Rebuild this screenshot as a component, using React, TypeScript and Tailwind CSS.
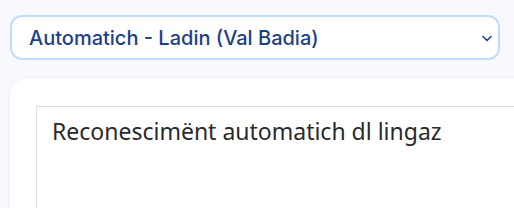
export default function App() {
  return (
    <div className="h-[208px] w-[514px] overflow-hidden bg-[#f8f9fc] px-[10px] pt-[15px]">
      {/* Language picker */}
      <div className="relative w-[490px]">
        <select
          defaultValue="auto-lld"
          className="h-[45px] w-full appearance-none rounded-[12px] border-2 border-[#bfdbfe] bg-white pl-[17px] pr-10 text-[20px] font-medium text-[#1e3f86] outline-none"
          style={{ fontFamily: 'Inter, "Noto Sans", sans-serif' }}
        >
          <option value="auto-lld">Automatich - Ladin (Val Badia)</option>
        </select>
        <svg
          className="pointer-events-none absolute right-[8px] top-[20px]"
          width="10"
          height="7"
          viewBox="0 0 10 7"
          fill="none"
        >
          <path d="M1 1.5 L5 5.5 L9 1.5" stroke="#1e3f86" strokeWidth="1.6" strokeLinecap="round" strokeLinejoin="round" />
        </svg>
      </div>

      {/* Input card */}
      <div className="mt-[19px] w-[540px] rounded-[16px] bg-white pl-[26px] pt-[27px] shadow-[0_0_6px_rgba(15,23,42,0.04)]">
        <textarea
          className="block h-[160px] w-full resize-none border border-[#d8dce3] px-[15px] py-[7px] text-[23px] leading-[1.5] text-[#2a2a2a] outline-none"
          style={{ fontFamily: '"Noto Sans", sans-serif' }}
          defaultValue="Reconescimënt automatich dl lingaz"
        />
      </div>
    </div>
  );
}
